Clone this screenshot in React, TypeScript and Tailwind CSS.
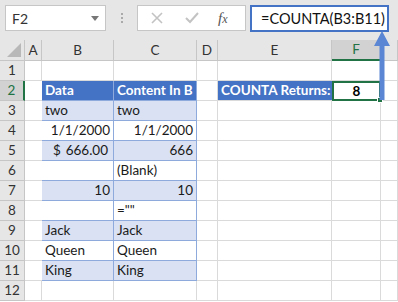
import React from "react";

const cols = [
  { key: "A", w: "w-[17px]" },
  { key: "B", w: "w-[72px]" },
  { key: "C", w: "w-[83px]" },
  { key: "D", w: "w-[21px]" },
  { key: "E", w: "w-[114px]" },
  { key: "F", w: "w-[49px]" },
  { key: "", w: "flex-1" },
];

type Cell = { text?: React.ReactNode; align?: "left" | "right" | "center" };

const tableRows: { b: Cell; c: Cell }[] = [
  { b: { text: "two" }, c: { text: "two" } },
  { b: { text: "1/1/2000", align: "right" }, c: { text: "1/1/2000", align: "right" } },
  {
    b: {
      text: (
        <span className="flex w-full justify-between pl-[8px] pr-[2px]">
          <span>$</span>
          <span>666.00</span>
        </span>
      ),
    },
    c: { text: "666", align: "right" },
  },
  { b: {}, c: { text: "(Blank)" } },
  { b: { text: "10", align: "right" }, c: { text: "10", align: "right" } },
  { b: {}, c: { text: '=""' } },
  { b: { text: "Jack" }, c: { text: "Jack" } },
  { b: { text: "Queen" }, c: { text: "Queen" } },
  { b: { text: "King" }, c: { text: "King" } },
];

const grid = "border-r border-b border-[#dadada]";

function TableCell({ cell, shaded, width }: { cell: Cell; shaded: boolean; width: string }) {
  const align =
    cell.align === "right" ? "justify-end" : cell.align === "center" ? "justify-center" : "justify-start";
  return (
    <div
      className={`${width} h-full flex items-center px-[3px] border-r border-b border-[#8ea9db] ${align} ${
        shaded ? "bg-[#d9e1f2]" : "bg-white"
      } text-[#1a1a1a]`}
    >
      {cell.text}
    </div>
  );
}

export default function App() {
  return (
    <div className="w-[398px] h-[302px] overflow-hidden bg-white relative font-['Lato',sans-serif] text-[13.5px]">
      {/* Formula bar */}
      <div className="h-[40px] bg-[#e6e6e6] flex items-start pt-[5px] pl-[5px]">
        <div className="w-[101px] h-[26px] bg-white border border-[#c6c6c6] flex items-center justify-between pl-[6px] pr-[6px] text-[#333] text-[14px]">
          <span>F2</span>
          <svg width="8" height="5" viewBox="0 0 8 5">
            <path d="M0 0 L8 0 L4 5 Z" fill="#777" />
          </svg>
        </div>
        <div className="w-[31px] h-[26px] flex flex-col items-center justify-center gap-[2px]">
          <span className="w-[2px] h-[2px] bg-[#aaa]" />
          <span className="w-[2px] h-[2px] bg-[#aaa]" />
          <span className="w-[2px] h-[2px] bg-[#aaa]" />
        </div>
        <div className="w-[109px] h-[26px] bg-white border border-[#c6c6c6] flex items-center pl-[13px]">
          <svg width="12" height="12" viewBox="0 0 12 12">
            <path d="M1 1 L11 11 M11 1 L1 11" stroke="#c3c3c3" strokeWidth="1.6" />
          </svg>
          <svg className="ml-[22px]" width="14" height="12" viewBox="0 0 14 12">
            <path d="M1 6 L5 10 L13 1" stroke="#c3c3c3" strokeWidth="2" fill="none" />
          </svg>
          <span className="ml-[19px] font-['Liberation_Serif',serif] italic text-[15px] text-[#555]">
            f<span className="text-[12px]">x</span>
          </span>
        </div>
        <div className="ml-[4px] w-[139px] h-[27px] bg-white border-2 border-[#4472c4] flex items-center pl-[9px] text-[14.5px] text-[#111]">
          =COUNTA(B3:B11)
        </div>
      </div>

      {/* Column headers */}
      <div className="flex h-[21px] bg-[#e6e6e6] text-[#333]">
        <div className="w-[25px] h-full border-r border-b border-[#c6c6c6] flex items-end justify-end p-[3px]">
          <svg width="14" height="14" viewBox="0 0 14 14">
            <path d="M14 0 L14 14 L0 14 Z" fill="#b8b8b8" />
          </svg>
        </div>
        {cols.map((c, i) => (
          <div
            key={i}
            className={`${c.w} h-full flex items-center justify-center border-r ${
              c.key === "F"
                ? "bg-[#d2d2d2] border-b-2 border-b-[#217346] border-r-[#c6c6c6] text-[#217346]"
                : "border-b border-[#c6c6c6]"
            }`}
          >
            {c.key}
          </div>
        ))}
      </div>

      {/* Rows */}
      {Array.from({ length: 12 }, (_, i) => i + 1).map((r) => {
        const inTable = r >= 2 && r <= 11;
        const selected = r === 2;
        return (
          <div key={r} className="flex h-[20px]">
            <div
              className={`w-[25px] h-full flex items-center justify-center border-b border-[#c6c6c6] ${
                selected
                  ? "bg-[#d2d2d2] border-r-2 border-r-[#217346] text-[#217346]"
                  : "bg-[#e6e6e6] border-r text-[#333]"
              }`}
            >
              {r}
            </div>
            <div className={`w-[17px] h-full ${inTable ? "border-b border-[#dadada]" : grid}`} />
            {inTable ? (
              r === 2 ? (
                <>
                  <div className="w-[72px] h-full flex items-center px-[3px] bg-[#4472c4] text-white font-bold border-r border-b border-[#8ea9db]">
                    Data
                  </div>
                  <div className="w-[83px] h-full flex items-center px-[3px] bg-[#4472c4] text-white font-bold border-r border-b border-[#8ea9db] whitespace-nowrap overflow-hidden">
                    Content In B
                  </div>
                </>
              ) : (
                <>
                  <TableCell cell={tableRows[r - 3].b} shaded={r % 2 === 1} width="w-[72px]" />
                  <TableCell cell={tableRows[r - 3].c} shaded={r % 2 === 1} width="w-[83px]" />
                </>
              )
            ) : (
              <>
                <div className={`w-[72px] h-full ${grid}`} />
                <div className={`w-[83px] h-full ${grid}`} />
              </>
            )}
            <div className={`w-[21px] h-full ${grid}`} />
            {selected ? (
              <>
                <div className="w-[114px] h-full flex items-center pl-[3px] bg-[#4472c4] text-white font-bold border-b border-[#dadada] whitespace-nowrap overflow-hidden">
                  COUNTA Returns:
                </div>
                <div className="w-[49px] h-full relative flex items-center justify-center bg-white border-2 border-[#217346] font-bold text-black">
                  8
                  <span className="absolute -right-[4px] -bottom-[4px] w-[6px] h-[6px] bg-[#217346] border border-white" />
                </div>
              </>
            ) : (
              <>
                <div className={`w-[114px] h-full ${grid}`} />
                <div className={`w-[49px] h-full ${grid}`} />
              </>
            )}
            <div className={`flex-1 h-full ${grid}`} />
          </div>
        );
      })}

      {/* Callout arrow */}
      <svg className="absolute left-[372px] top-[30px]" width="20" height="72" viewBox="0 0 20 72">
        <path d="M10 1 L18 16 L12.5 16 L12.5 70 L7.5 70 L7.5 16 L2 16 Z" fill="#5b86d4" />
      </svg>
    </div>
  );
}
